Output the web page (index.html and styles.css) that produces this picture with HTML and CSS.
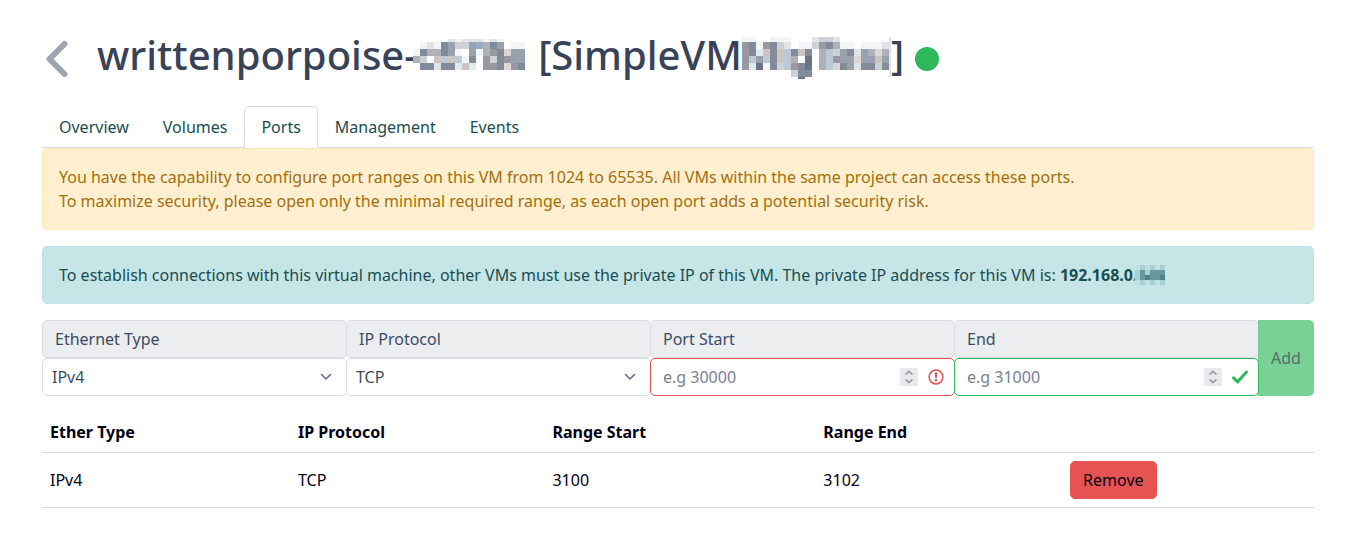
FILE: index.html
```html
<!DOCTYPE html>
<html lang="en">
<head>
<meta charset="utf-8">
<meta name="viewport" content="width=device-width, initial-scale=1">
<title>Virtual machine ports</title>
<link rel="stylesheet" href="styles.css">
</head>
<body>
<main class="page">
  <header class="page-header">
    <a class="back" href="#" aria-label="Back"><svg width="24" height="40" viewBox="0 0 24 40"><path d="M19.500 5 4.500 20l15 15" fill="none" stroke="#9da5b1" stroke-width="6" stroke-linecap="round" stroke-linejoin="round"/></svg></a>
    <h1 class="title">
      <span>writtenporpoise-<svg class="mosaic mosaic-name" width="114" height="42" data-size="7" data-tops="2 5 12 19 26 33" data-rows=".....babbbaba..../.abafecceidfe.aa./afddfea.eadnfoee./dc.tltlaf.ncfneea/.ffbffwtw.nnfonf."></svg></span>
      <span>[SimpleVM<svg class="mosaic mosaic-project" width="149" height="42" data-size="7" data-tops="0 5 12 19 26 33 40 42" data-rows="aa..aaa...bccb.......b/nfanfcb.aacnfdaa.aaabb/nfwtftlftf.dlcefbedodb/nlelftld.g.dlneeoeeteb/nwgafclnfg.dlofebffcfb/.......cff...........b/........g............."></svg>]</span>
      <span class="status" role="img" aria-label="Active"></span>
    </h1>
  </header>

  <nav class="tabs">
    <a class="tab" href="#">Overview</a>
    <a class="tab" href="#">Volumes</a>
    <a class="tab tab-active" href="#" aria-current="page">Ports</a>
    <a class="tab" href="#">Management</a>
    <a class="tab" href="#">Events</a>
  </nav>

  <div class="alert alert-warning">You have the capability to configure port ranges on this VM from 1024 to 65535. All VMs within the same project can access these ports.<br>To maximize security, please open only the minimal required range, as each open port adds a potential security risk.</div>
  <div class="alert alert-info">To establish connections with this virtual machine, other VMs must use the private IP of this VM. The private IP address for this VM is: <strong>192.168.0.<svg class="mosaic mosaic-ip" width="30" height="20" data-size="5" data-tops="0 5 10 15 20" data-rows="qpqpqp/prprrr/prsrrs/qpqpqp"></svg></strong></div>

  <form class="port-form">
    <div class="field">
      <label class="field-label" for="ether">Ethernet Type</label>
      <div class="control">
        <select class="input select" id="ether"><option>IPv4</option><option>IPv6</option></select>
        <svg class="mark mark-select" width="14" height="14" viewBox="0 0 14 14"><path d="M2.500 4.500 7 9l4.500-4.500" fill="none" stroke="#636f83" stroke-width="1.600" stroke-linecap="round" stroke-linejoin="round"/></svg>
      </div>
    </div>
    <div class="field">
      <label class="field-label" for="protocol">IP Protocol</label>
      <div class="control">
        <select class="input select" id="protocol"><option>TCP</option><option>UDP</option></select>
        <svg class="mark mark-select" width="14" height="14" viewBox="0 0 14 14"><path d="M2.500 4.500 7 9l4.500-4.500" fill="none" stroke="#636f83" stroke-width="1.600" stroke-linecap="round" stroke-linejoin="round"/></svg>
      </div>
    </div>
    <div class="field">
      <label class="field-label" for="start">Port Start</label>
      <div class="control">
        <input class="input input-invalid" id="start" type="number" placeholder="e.g 30000">
        <svg class="mark mark-spin" width="18" height="18" viewBox="0 0 18 18"><path fill="#e9e8ed" d="M0 0h18v18H0z"/><path d="M5.500 6.500 9 3.500l3.500 3M5.500 11.500l3.500 3 3.500-3" fill="none" stroke="#908f98" stroke-width="1.500"/></svg>
        <svg class="mark mark-state" width="16" height="16" viewBox="0 0 16 16"><circle cx="8" cy="8" r="6.900" fill="none" stroke="#e55353" stroke-width="1.500"/><path d="M6.800 3.500h2.400L8.800 9H7.200z" fill="#e55353"/><circle cx="8" cy="11.300" r="1.200" fill="#e55353"/></svg>
      </div>
    </div>
    <div class="field">
      <label class="field-label" for="end">End</label>
      <div class="control">
        <input class="input input-valid" id="end" type="number" placeholder="e.g 31000">
        <svg class="mark mark-spin" width="18" height="18" viewBox="0 0 18 18"><path fill="#e9e8ed" d="M0 0h18v18H0z"/><path d="M5.500 6.500 9 3.500l3.500 3M5.500 11.500l3.500 3 3.500-3" fill="none" stroke="#908f98" stroke-width="1.500"/></svg>
        <svg class="mark mark-state" width="16" height="16" viewBox="0 0 16 16"><path d="m1.500 8.800 4.200 4L14.500 3" fill="none" stroke="#2eb85c" stroke-width="3" stroke-linecap="round"/></svg>
      </div>
    </div>
    <button class="add" type="button" disabled>Add</button>
  </form>

  <table class="ports">
    <colgroup><col class="col-ether"><col class="col-protocol"><col class="col-start"><col class="col-end"><col></colgroup>
    <thead><tr><th>Ether Type</th><th>IP Protocol</th><th>Range Start</th><th>Range End</th><th></th></tr></thead>
    <tbody><tr><td>IPv4</td><td>TCP</td><td>3100</td><td>3102</td><td><button class="remove" type="button">Remove</button></td></tr></tbody>
  </table>
</main>
<script src="mosaic.js"></script>
</body>
</html>
```
FILE: styles.css
```css
*, *::before, *::after { box-sizing: border-box; }

body {
  margin: 0;
  background: #fff;
  color: #3c4b64;
  font: 16px/24px "Noto Sans", "Open Sans", sans-serif;
}

button, input, select { font: inherit; }

.page { padding: 31px 46px 32px 42px; }

.page-header {
  display: flex;
  align-items: center;
  gap: 28px;
  margin-bottom: 27px;
}

.back {
  display: flex;
  padding: 8px 0 0 3px;
}

.title {
  display: flex;
  align-items: center;
  gap: 11px;
  margin: 0;
  color: #384357;
  font-size: 40px;
  font-weight: 500;
  line-height: 48px;
  white-space: nowrap;
}

.mosaic { vertical-align: -9px; }
.mosaic-name { margin-left: -4px; }
.mosaic-ip { margin-left: -2px; vertical-align: -4px; }

.status {
  width: 24px;
  height: 24px;
  margin-top: 8px;
  border-radius: 50%;
  background: #2eb85c;
}

.tabs {
  display: flex;
  border-bottom: 1px solid #d8dbe0;
}

.tab {
  margin-bottom: -1px;
  padding: 8px 16px;
  border: 1px solid transparent;
  border-radius: 5px 5px 0 0;
  color: #194e51;
  text-decoration: none;
}

.tab-active {
  border-color: #d8dbe0 #d8dbe0 #fff;
  background: #fff;
}

.alert {
  margin-bottom: 16px;
  padding: 16px;
  border: 1px solid;
  border-radius: 5px;
}

.alert-warning {
  border-color: #fde7ba;
  background: #feefd0;
  color: #a2700c;
}

.alert-info {
  border-color: #bfe2e8;
  background: #c6e5e7;
  color: #194e51;
}

.port-form {
  display: flex;
  margin-bottom: 16px;
}

.field {
  flex: 1;
  margin-right: -1px;
}

.field-label {
  display: block;
  padding: 6px 12px;
  border: 1px solid #d8dbe0;
  border-radius: 5px;
  background: #ebedef;
}

.control { position: relative; }

.input {
  display: block;
  width: 100%;
  height: 38px;
  margin: 0;
  padding: 6px 12px;
  border: 1px solid #d8dbe0;
  border-radius: 5px;
  background: #fff;
  color: #3c4b64;
  appearance: none;
}

.input[type="number"] { appearance: textfield; }
.input::-webkit-inner-spin-button { display: none; }
.input::placeholder { color: #768192; opacity: 1; }
.select { padding-left: 9px; }
.input-invalid { border-color: #e55353; }
.input-valid { border-color: #2eb85c; }

.mark {
  position: absolute;
  pointer-events: none;
}

.mark-select { top: 12px; right: 14px; }
.mark-spin { top: 10px; right: 37px; }
.mark-state { top: 11px; right: 11px; }

.add {
  width: 56px;
  padding: 0;
  border: 0;
  border-radius: 0 5px 5px 0;
  background: #79d295;
  color: #596b69;
}

.ports {
  width: 100%;
  border-collapse: collapse;
  table-layout: fixed;
  color: #000015;
}

.col-ether { width: 19.5%; }
.col-protocol { width: 20%; }
.col-start { width: 21.3%; }
.col-end { width: 19.4%; }

.ports th, .ports td {
  padding: 8px;
  border-bottom: 1px solid #d8dbe0;
  text-align: left;
}

.remove {
  display: block;
  padding: 6px 12px;
  border: 1px solid #e55353;
  border-radius: 5px;
  background: #e55353;
  color: #000015;
}
```
FILE: mosaic.js
```js
const shades = {
  a: "#f3f4f6", b: "#e1e3e6", c: "#cdd0d5", d: "#aeb1b7", e: "#98a1ae",
  f: "#828b99", g: "#6a7584", i: "#99aac2", l: "#bcc9d7", n: "#9a989e",
  o: "#dfd6d3", t: "#cbc4c1", w: "#dfe9f0",
  p: "#a8cfd1", q: "#bde0e2", r: "#6b989e", s: "#4f8187"
};

for (const svg of document.querySelectorAll(".mosaic")) {
  const size = Number(svg.dataset.size);
  const tops = svg.dataset.tops.split(" ").map(Number);
  svg.dataset.rows.split("/").forEach((row, r) => {
    const bottom = tops[r + 1] ?? tops[r] + size;
    [...row].forEach((key, c) => {
      if (!shades[key]) return;
      const cell = document.createElementNS("http://www.w3.org/2000/svg", "rect");
      cell.setAttribute("x", c * size);
      cell.setAttribute("y", tops[r]);
      cell.setAttribute("width", size);
      cell.setAttribute("height", bottom - tops[r]);
      cell.setAttribute("fill", shades[key]);
      svg.append(cell);
    });
  });
}
```
